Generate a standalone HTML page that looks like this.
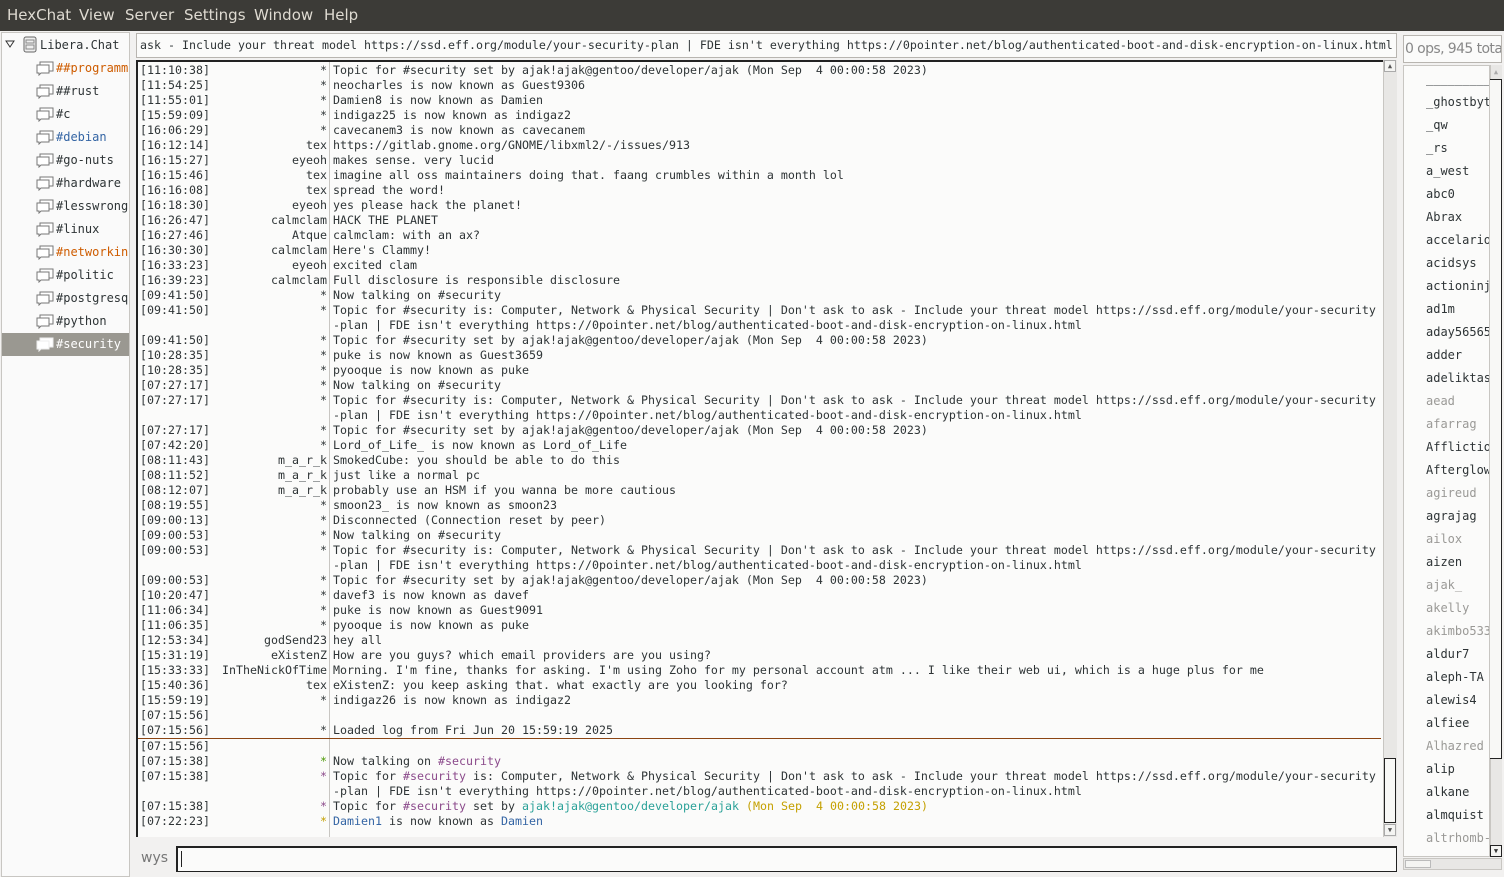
<!DOCTYPE html>
<html><head><meta charset="utf-8"><style>
*{margin:0;padding:0;box-sizing:border-box}
body{width:1504px;height:877px;background:#f2f1f0;position:relative;overflow:hidden;font-family:"DejaVu Sans Mono","Liberation Mono",monospace;font-size:11.63px;color:#2e3436}
.menu{position:absolute;left:0;top:0;width:1504px;height:31px;background:#3c3b37;color:#dfdbd2;font-family:"DejaVu Sans","Liberation Sans",sans-serif;font-size:15px}
.menu span{position:absolute;top:6px}
.tree{position:absolute;left:1px;top:32px;width:129px;height:845px;background:#fafafa;border:1px solid #c8c6c2;font-size:12px}
.tree div{position:absolute;height:23px;line-height:23px;white-space:nowrap;overflow:hidden;width:93px}
.tree svg{position:absolute;left:0;top:4px}
.ent{position:absolute;background:#fbfbfa;border:1px solid #b8b5b0}
.chat{position:absolute;left:136px;top:60px;width:1247px;height:777px;background:#fbfbfa;border-left:2px solid #222;border-top:2px solid #222;overflow:hidden}
.sep{position:absolute;left:191px;top:0;width:1px;height:777px;background:#c8c6c2}
.r{position:absolute;left:0;height:15px;line-height:15px;width:1245px;white-space:pre;margin-top:1px}
.t{position:absolute;left:2px}
.n{position:absolute;right:1056px;text-align:right}
.x{position:absolute;left:195px}
.sb{position:absolute;background:#e8e7e5;border-left:1px solid #c8c6c2}
.users{position:absolute;left:1403px;top:65px;width:87px;height:792px;background:#fbfbfa;border:1px solid #c8c6c2;overflow:hidden;font-size:12px}
.users div{position:absolute;left:22px;height:23px;line-height:23px;white-space:pre}
.g{color:#9a9996}
.p{color:#8b4a8b}.gr{color:#2aa198}.o{color:#c4a000}.b{color:#3465a4}
</style></head><body>
<div class="menu"><span style="left:7px">HexChat</span><span style="left:79px">View</span><span style="left:125px">Server</span><span style="left:184px">Settings</span><span style="left:254px">Window</span><span style="left:324px">Help</span></div>

<div class="tree">
<svg style="position:absolute;left:3px;top:7px" width="10" height="8"><path d="M1 1 L9 1 L5 7 Z" fill="none" stroke="#333"/></svg>
<svg style="position:absolute;left:21px;top:3px" width="14" height="17"><rect x="1" y="1" width="12" height="15" rx="2" fill="#eee" stroke="#666"/><rect x="3" y="4" width="8" height="3" fill="none" stroke="#888"/><rect x="3" y="9" width="8" height="4" fill="none" stroke="#888"/></svg>
<div style="left:38px;top:1px">Libera.Chat</div>
<div style="left:34px;top:24px"><svg width="18" height="15"><rect x="4" y="1" width="13" height="9" fill="#fff" stroke="#777"/><path d="M1 4 H13 V12 H5 L3 14 V12 H1 Z" fill="#fff" stroke="#777"/></svg><span style="position:absolute;left:20px;color:#ce5c00">##programming</span></div>
<div style="left:34px;top:47px"><svg width="18" height="15"><rect x="4" y="1" width="13" height="9" fill="#fff" stroke="#777"/><path d="M1 4 H13 V12 H5 L3 14 V12 H1 Z" fill="#fff" stroke="#777"/></svg><span style="position:absolute;left:20px">##rust</span></div>
<div style="left:34px;top:70px"><svg width="18" height="15"><rect x="4" y="1" width="13" height="9" fill="#fff" stroke="#777"/><path d="M1 4 H13 V12 H5 L3 14 V12 H1 Z" fill="#fff" stroke="#777"/></svg><span style="position:absolute;left:20px">#c</span></div>
<div style="left:34px;top:93px"><svg width="18" height="15"><rect x="4" y="1" width="13" height="9" fill="#fff" stroke="#777"/><path d="M1 4 H13 V12 H5 L3 14 V12 H1 Z" fill="#fff" stroke="#777"/></svg><span style="position:absolute;left:20px;color:#3465a4">#debian</span></div>
<div style="left:34px;top:116px"><svg width="18" height="15"><rect x="4" y="1" width="13" height="9" fill="#fff" stroke="#777"/><path d="M1 4 H13 V12 H5 L3 14 V12 H1 Z" fill="#fff" stroke="#777"/></svg><span style="position:absolute;left:20px">#go-nuts</span></div>
<div style="left:34px;top:139px"><svg width="18" height="15"><rect x="4" y="1" width="13" height="9" fill="#fff" stroke="#777"/><path d="M1 4 H13 V12 H5 L3 14 V12 H1 Z" fill="#fff" stroke="#777"/></svg><span style="position:absolute;left:20px">#hardware</span></div>
<div style="left:34px;top:162px"><svg width="18" height="15"><rect x="4" y="1" width="13" height="9" fill="#fff" stroke="#777"/><path d="M1 4 H13 V12 H5 L3 14 V12 H1 Z" fill="#fff" stroke="#777"/></svg><span style="position:absolute;left:20px">#lesswrong</span></div>
<div style="left:34px;top:185px"><svg width="18" height="15"><rect x="4" y="1" width="13" height="9" fill="#fff" stroke="#777"/><path d="M1 4 H13 V12 H5 L3 14 V12 H1 Z" fill="#fff" stroke="#777"/></svg><span style="position:absolute;left:20px">#linux</span></div>
<div style="left:34px;top:208px"><svg width="18" height="15"><rect x="4" y="1" width="13" height="9" fill="#fff" stroke="#777"/><path d="M1 4 H13 V12 H5 L3 14 V12 H1 Z" fill="#fff" stroke="#777"/></svg><span style="position:absolute;left:20px;color:#ce5c00">#networking</span></div>
<div style="left:34px;top:231px"><svg width="18" height="15"><rect x="4" y="1" width="13" height="9" fill="#fff" stroke="#777"/><path d="M1 4 H13 V12 H5 L3 14 V12 H1 Z" fill="#fff" stroke="#777"/></svg><span style="position:absolute;left:20px">#politic</span></div>
<div style="left:34px;top:254px"><svg width="18" height="15"><rect x="4" y="1" width="13" height="9" fill="#fff" stroke="#777"/><path d="M1 4 H13 V12 H5 L3 14 V12 H1 Z" fill="#fff" stroke="#777"/></svg><span style="position:absolute;left:20px">#postgresql</span></div>
<div style="left:34px;top:277px"><svg width="18" height="15"><rect x="4" y="1" width="13" height="9" fill="#fff" stroke="#777"/><path d="M1 4 H13 V12 H5 L3 14 V12 H1 Z" fill="#fff" stroke="#777"/></svg><span style="position:absolute;left:20px">#python</span></div>
<div style="left:0;top:300px;width:127px;background:#9a9891"><svg style="left:34px" width="18" height="15"><rect x="4" y="1" width="13" height="9" fill="#fff" stroke="#eee"/><path d="M1 4 H13 V12 H5 L3 14 V12 H1 Z" fill="#fff" stroke="#eee"/></svg><span style="position:absolute;left:54px;color:#fff">#security</span></div>
</div>

<div class="ent" style="left:136px;top:33px;width:1261px;height:25px;line-height:23px;padding-left:3px;white-space:pre;overflow:hidden">ask - Include your threat model https://ssd.eff.org/module/your-security-plan | FDE isn't everything https://0pointer.net/blog/authenticated-boot-and-disk-encryption-on-linux.html</div>

<div class="chat">
<div class="sep"></div>
<div class="r" style="top:0"><span class="t">[11:10:38]</span><span class="n">*</span><span class="x">Topic for #security set by ajak!ajak@gentoo/developer/ajak (Mon Sep  4 00:00:58 2023)</span></div>
<div class="r" style="top:15px"><span class="t">[11:54:25]</span><span class="n">*</span><span class="x">neocharles is now known as Guest9306</span></div>
<div class="r" style="top:30px"><span class="t">[11:55:01]</span><span class="n">*</span><span class="x">Damien8 is now known as Damien</span></div>
<div class="r" style="top:45px"><span class="t">[15:59:09]</span><span class="n">*</span><span class="x">indigaz25 is now known as indigaz2</span></div>
<div class="r" style="top:60px"><span class="t">[16:06:29]</span><span class="n">*</span><span class="x">cavecanem3 is now known as cavecanem</span></div>
<div class="r" style="top:75px"><span class="t">[16:12:14]</span><span class="n">tex</span><span class="x">https://gitlab.gnome.org/GNOME/libxml2/-/issues/913</span></div>
<div class="r" style="top:90px"><span class="t">[16:15:27]</span><span class="n">eyeoh</span><span class="x">makes sense. very lucid</span></div>
<div class="r" style="top:105px"><span class="t">[16:15:46]</span><span class="n">tex</span><span class="x">imagine all oss maintainers doing that. faang crumbles within a month lol</span></div>
<div class="r" style="top:120px"><span class="t">[16:16:08]</span><span class="n">tex</span><span class="x">spread the word!</span></div>
<div class="r" style="top:135px"><span class="t">[16:18:30]</span><span class="n">eyeoh</span><span class="x">yes please hack the planet!</span></div>
<div class="r" style="top:150px"><span class="t">[16:26:47]</span><span class="n">calmclam</span><span class="x">HACK THE PLANET</span></div>
<div class="r" style="top:165px"><span class="t">[16:27:46]</span><span class="n">Atque</span><span class="x">calmclam: with an ax?</span></div>
<div class="r" style="top:180px"><span class="t">[16:30:30]</span><span class="n">calmclam</span><span class="x">Here's Clammy!</span></div>
<div class="r" style="top:195px"><span class="t">[16:33:23]</span><span class="n">eyeoh</span><span class="x">excited clam</span></div>
<div class="r" style="top:210px"><span class="t">[16:39:23]</span><span class="n">calmclam</span><span class="x">Full disclosure is responsible disclosure</span></div>
<div class="r" style="top:225px"><span class="t">[09:41:50]</span><span class="n">*</span><span class="x">Now talking on #security</span></div>
<div class="r" style="top:240px"><span class="t">[09:41:50]</span><span class="n">*</span><span class="x">Topic for #security is: Computer, Network &amp; Physical Security | Don't ask to ask - Include your threat model https://ssd.eff.org/module/your-security</span></div>
<div class="r" style="top:255px"><span class="x">-plan | FDE isn't everything https://0pointer.net/blog/authenticated-boot-and-disk-encryption-on-linux.html</span></div>
<div class="r" style="top:270px"><span class="t">[09:41:50]</span><span class="n">*</span><span class="x">Topic for #security set by ajak!ajak@gentoo/developer/ajak (Mon Sep  4 00:00:58 2023)</span></div>
<div class="r" style="top:285px"><span class="t">[10:28:35]</span><span class="n">*</span><span class="x">puke is now known as Guest3659</span></div>
<div class="r" style="top:300px"><span class="t">[10:28:35]</span><span class="n">*</span><span class="x">pyooque is now known as puke</span></div>
<div class="r" style="top:315px"><span class="t">[07:27:17]</span><span class="n">*</span><span class="x">Now talking on #security</span></div>
<div class="r" style="top:330px"><span class="t">[07:27:17]</span><span class="n">*</span><span class="x">Topic for #security is: Computer, Network &amp; Physical Security | Don't ask to ask - Include your threat model https://ssd.eff.org/module/your-security</span></div>
<div class="r" style="top:345px"><span class="x">-plan | FDE isn't everything https://0pointer.net/blog/authenticated-boot-and-disk-encryption-on-linux.html</span></div>
<div class="r" style="top:360px"><span class="t">[07:27:17]</span><span class="n">*</span><span class="x">Topic for #security set by ajak!ajak@gentoo/developer/ajak (Mon Sep  4 00:00:58 2023)</span></div>
<div class="r" style="top:375px"><span class="t">[07:42:20]</span><span class="n">*</span><span class="x">Lord_of_Life_ is now known as Lord_of_Life</span></div>
<div class="r" style="top:390px"><span class="t">[08:11:43]</span><span class="n">m_a_r_k</span><span class="x">SmokedCube: you should be able to do this</span></div>
<div class="r" style="top:405px"><span class="t">[08:11:52]</span><span class="n">m_a_r_k</span><span class="x">just like a normal pc</span></div>
<div class="r" style="top:420px"><span class="t">[08:12:07]</span><span class="n">m_a_r_k</span><span class="x">probably use an HSM if you wanna be more cautious</span></div>
<div class="r" style="top:435px"><span class="t">[08:19:55]</span><span class="n">*</span><span class="x">smoon23_ is now known as smoon23</span></div>
<div class="r" style="top:450px"><span class="t">[09:00:13]</span><span class="n">*</span><span class="x">Disconnected (Connection reset by peer)</span></div>
<div class="r" style="top:465px"><span class="t">[09:00:53]</span><span class="n">*</span><span class="x">Now talking on #security</span></div>
<div class="r" style="top:480px"><span class="t">[09:00:53]</span><span class="n">*</span><span class="x">Topic for #security is: Computer, Network &amp; Physical Security | Don't ask to ask - Include your threat model https://ssd.eff.org/module/your-security</span></div>
<div class="r" style="top:495px"><span class="x">-plan | FDE isn't everything https://0pointer.net/blog/authenticated-boot-and-disk-encryption-on-linux.html</span></div>
<div class="r" style="top:510px"><span class="t">[09:00:53]</span><span class="n">*</span><span class="x">Topic for #security set by ajak!ajak@gentoo/developer/ajak (Mon Sep  4 00:00:58 2023)</span></div>
<div class="r" style="top:525px"><span class="t">[10:20:47]</span><span class="n">*</span><span class="x">davef3 is now known as davef</span></div>
<div class="r" style="top:540px"><span class="t">[11:06:34]</span><span class="n">*</span><span class="x">puke is now known as Guest9091</span></div>
<div class="r" style="top:555px"><span class="t">[11:06:35]</span><span class="n">*</span><span class="x">pyooque is now known as puke</span></div>
<div class="r" style="top:570px"><span class="t">[12:53:34]</span><span class="n">godSend23</span><span class="x">hey all</span></div>
<div class="r" style="top:585px"><span class="t">[15:31:19]</span><span class="n">eXistenZ</span><span class="x">How are you guys? which email providers are you using?</span></div>
<div class="r" style="top:600px"><span class="t">[15:33:33]</span><span class="n">InTheNickOfTime</span><span class="x">Morning. I'm fine, thanks for asking. I'm using Zoho for my personal account atm ... I like their web ui, which is a huge plus for me</span></div>
<div class="r" style="top:615px"><span class="t">[15:40:36]</span><span class="n">tex</span><span class="x">eXistenZ: you keep asking that. what exactly are you looking for?</span></div>
<div class="r" style="top:630px"><span class="t">[15:59:19]</span><span class="n">*</span><span class="x">indigaz26 is now known as indigaz2</span></div>
<div class="r" style="top:645px"><span class="t">[07:15:56]</span></div>
<div class="r" style="top:660px"><span class="t">[07:15:56]</span><span class="n">*</span><span class="x">Loaded log from Fri Jun 20 15:59:19 2025</span></div>
<div style="position:absolute;left:0;top:676px;width:1243px;height:1px;background:#8b4513"></div>
<div class="r" style="top:676px"><span class="t">[07:15:56]</span></div>
<div class="r" style="top:691px"><span class="t">[07:15:38]</span><span class="n" style="color:#4e9a06">*</span><span class="x">Now talking on <span class="p">#security</span></span></div>
<div class="r" style="top:706px"><span class="t">[07:15:38]</span><span class="n p">*</span><span class="x">Topic for <span class="p">#security</span> is: Computer, Network &amp; Physical Security | Don't ask to ask - Include your threat model https://ssd.eff.org/module/your-security</span></div>
<div class="r" style="top:721px"><span class="x">-plan | FDE isn't everything https://0pointer.net/blog/authenticated-boot-and-disk-encryption-on-linux.html</span></div>
<div class="r" style="top:736px"><span class="t">[07:15:38]</span><span class="n p">*</span><span class="x">Topic for <span class="p">#security</span> set by <span class="gr">ajak!ajak@gentoo/developer/ajak</span> <span class="o">(Mon Sep  4 00:00:58 2023)</span></span></div>
<div class="r" style="top:751px"><span class="t">[07:22:23]</span><span class="n o">*</span><span class="x"><span class="b">Damien1</span> is now known as <span class="b">Damien</span></span></div>
</div>
<div class="sb" style="left:1383px;top:60px;width:14px;height:777px"></div>
<div style="position:absolute;left:1384px;top:60px;width:12px;height:12px;background:#f4f4f2;border:1px solid #aaa;font-size:7px;text-align:center;line-height:10px;color:#555">▲</div>
<div style="position:absolute;left:1384px;top:758px;width:12px;height:65px;background:#f8f8f6;border:1px solid #222"></div>
<div style="position:absolute;left:1384px;top:824px;width:12px;height:12px;background:#f4f4f2;border:1px solid #aaa;font-size:7px;text-align:center;line-height:10px;color:#555">▼</div>

<div style="position:absolute;left:141px;top:850px;font-family:'DejaVu Sans','Liberation Sans',sans-serif;font-size:14px;color:#777">wys</div>
<div class="ent" style="left:176px;top:846px;width:1221px;height:26px;border:1px solid #222;border-width:2px 1px 1px 2px"><div style="position:absolute;left:3px;top:3px;width:1px;height:16px;background:#222"></div></div>

<div class="ent" style="left:1403px;top:35px;width:99px;height:28px;line-height:27px;padding-left:1px;font-family:'DejaVu Sans','Liberation Sans',sans-serif;font-size:14px;letter-spacing:-0.6px;color:#888;white-space:nowrap;overflow:hidden">0 ops, 945 total</div>
<div class="users">
<div style="top:2px">__________</div>
<div style="top:25px">_ghostbyte</div><div style="top:48px">_qw</div><div style="top:71px">_rs</div><div style="top:94px">a_west</div><div style="top:117px">abc0</div><div style="top:140px">Abrax</div><div style="top:163px">accelario</div><div style="top:186px">acidsys</div><div style="top:209px">actioninj</div><div style="top:232px">ad1m</div><div style="top:255px">aday56565</div><div style="top:278px">adder</div><div style="top:301px">adeliktas</div><div class="g" style="top:324px">aead</div><div class="g" style="top:347px">afarrag</div><div style="top:370px">Afflictio</div><div style="top:393px">Afterglow</div><div class="g" style="top:416px">agireud</div><div style="top:439px">agrajag</div><div class="g" style="top:462px">ailox</div><div style="top:485px">aizen</div><div class="g" style="top:508px">ajak_</div><div class="g" style="top:531px">akelly</div><div class="g" style="top:554px">akimbo533</div><div style="top:577px">aldur7</div><div style="top:600px">aleph-TA</div><div style="top:623px">alewis4</div><div style="top:646px">alfiee</div><div class="g" style="top:669px">Alhazred</div><div style="top:692px">alip</div><div style="top:715px">alkane</div><div style="top:738px">almquist</div><div class="g" style="top:761px">altrhomb-</div><div class="g" style="top:784px">-</div>
</div>
<div class="sb" style="left:1490px;top:65px;width:12px;height:792px"></div>
<div style="position:absolute;left:1490px;top:66px;width:12px;height:12px;font-size:7px;text-align:center;line-height:12px;color:#aaa">▲</div>
<div style="position:absolute;left:1490px;top:79px;width:12px;height:680px;background:#f8f8f6;border:1px solid #222;border-width:1px 1px 1px 0"></div>
<div style="position:absolute;left:1490px;top:845px;width:12px;height:12px;background:#f4f4f2;border:1px solid #222;font-size:7px;text-align:center;line-height:10px;color:#333">▼</div>
<div style="position:absolute;left:1403px;top:858px;width:99px;height:12px;background:#e8e7e5;border:1px solid #c8c6c2"><div style="position:absolute;left:1px;top:1px;width:26px;height:8px;border:1px solid #bbb;background:#f4f4f2"></div></div>
</body></html>
